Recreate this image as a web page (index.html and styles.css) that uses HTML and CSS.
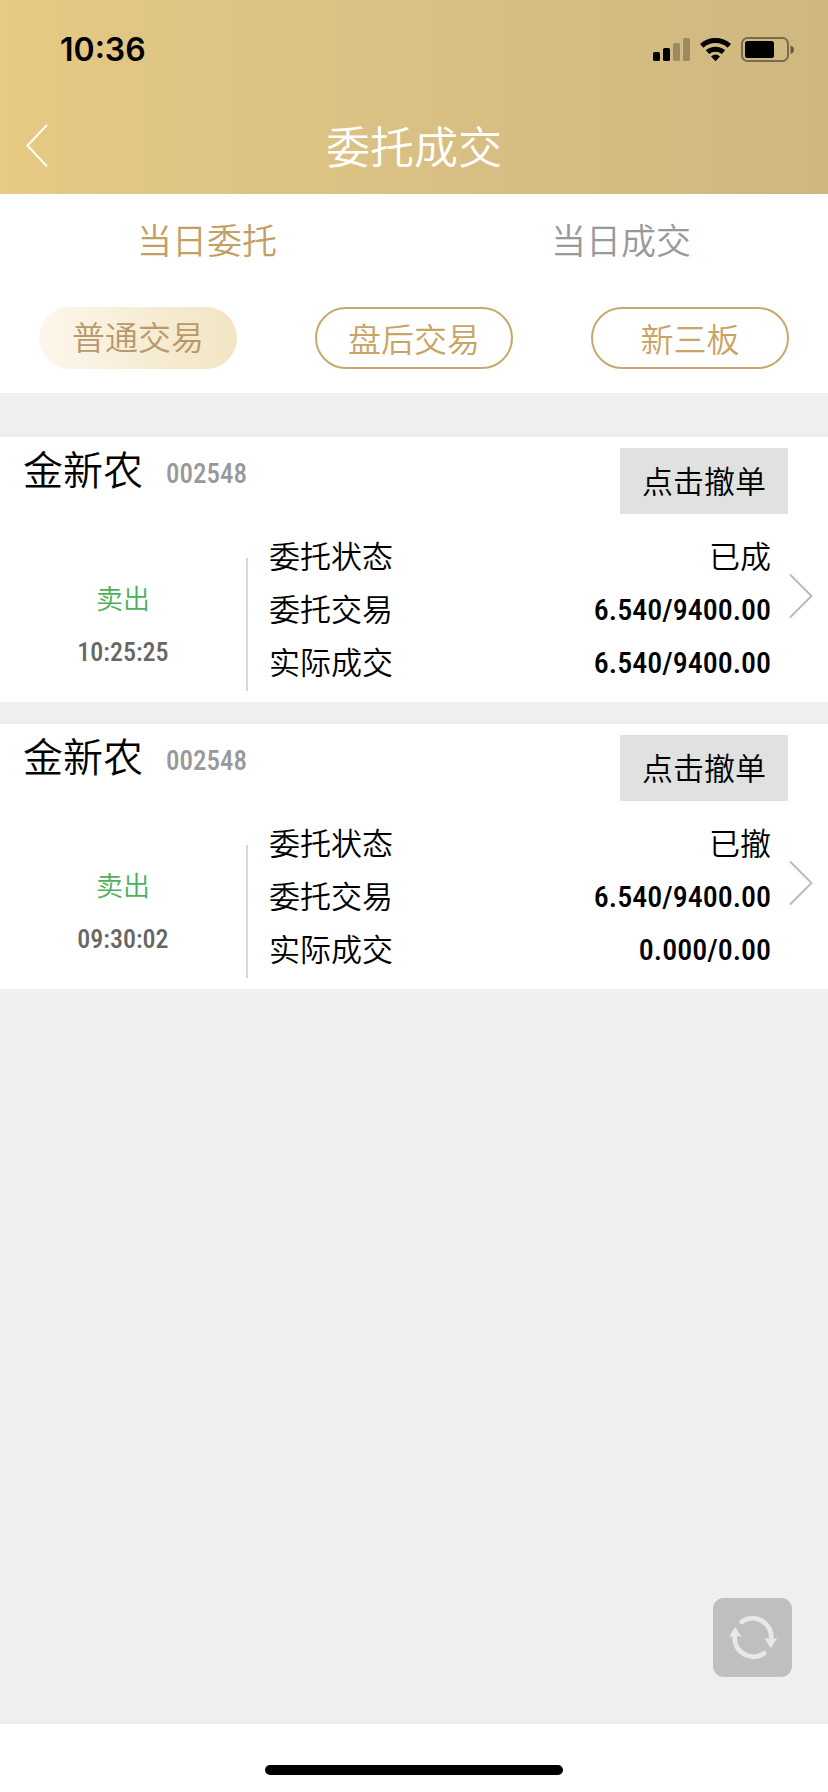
FILE: index.html
```html
<!DOCTYPE html>
<html lang="zh-CN">
<head>
<meta charset="utf-8">
<meta name="viewport" content="width=device-width, initial-scale=1">
<title>委托成交</title>
<link rel="stylesheet" href="styles.css">
</head>
<body>
<div class="app">
  <header class="header">
    <div class="status">
      <span class="status-time">10:36</span>
      <svg class="status-icons" viewBox="0 0 141 26" aria-hidden="true">
        <rect x="0" y="15" width="7" height="9" rx="1.5"/>
        <rect x="10" y="11" width="7" height="13" rx="1.5"/>
        <g opacity=".25"><rect x="20" y="6" width="7" height="18" rx="1.5"/><rect x="30" y="1" width="7" height="23" rx="1.5"/></g>
        <g fill="none" stroke="#000" stroke-width="5">
          <path d="M48.7 8.8A20.6 20.6 0 0 1 76.3 8.8"/>
          <path d="M54.5 15.2A12 12 0 0 1 70.5 15.2"/>
        </g>
        <path d="M62.5 24.2L58 19.6Q62.5 15.4 67 19.6Z"/>
        <rect x="89" y="1" width="46" height="23" rx="5.5" fill="none" stroke="#000" stroke-opacity=".42" stroke-width="2"/>
        <rect x="92" y="4" width="29" height="17" rx="2.500"/>
        <path d="M137.500 8.500Q141 9.500 141 12.700T137.500 17Z" opacity=".5"/>
      </svg>
    </div>
    <div class="titlebar">
      <button class="back" type="button" aria-label="返回">
        <svg viewBox="0 0 22 44" aria-hidden="true"><path d="M21 1L1.500 21.500L21 42.500"/></svg>
      </button>
      <h1 class="title">委托成交</h1>
    </div>
  </header>

  <nav class="filters">
    <div class="tabs">
      <button class="tab tab-active" type="button">当日委托</button>
      <button class="tab" type="button">当日成交</button>
    </div>
    <div class="pills">
      <button class="pill pill-active" type="button">普通交易</button>
      <button class="pill" type="button">盘后交易</button>
      <button class="pill" type="button">新三板</button>
    </div>
  </nav>

  <main class="orders">
    <article class="card">
      <div class="card-head">
        <h2 class="stock">金新农</h2>
        <span class="code">002548</span>
        <button class="cancel" type="button">点击撤单</button>
      </div>
      <div class="card-body">
        <div class="side">
          <span class="sell">卖出</span>
          <time class="time">10:25:25</time>
        </div>
        <dl class="details">
          <div class="row"><dt>委托状态</dt><dd>已成</dd></div>
          <div class="row"><dt>委托交易</dt><dd class="num">6.540/9400.00</dd></div>
          <div class="row"><dt>实际成交</dt><dd class="num">6.540/9400.00</dd></div>
        </dl>
        <button class="more" type="button" aria-label="查看详情">
          <svg viewBox="0 0 24 46" aria-hidden="true"><path d="M1 1.500L22.500 23L1 44.500"/></svg>
        </button>
      </div>
    </article>

    <article class="card">
      <div class="card-head">
        <h2 class="stock">金新农</h2>
        <span class="code">002548</span>
        <button class="cancel" type="button">点击撤单</button>
      </div>
      <div class="card-body">
        <div class="side">
          <span class="sell">卖出</span>
          <time class="time">09:30:02</time>
        </div>
        <dl class="details">
          <div class="row"><dt>委托状态</dt><dd>已撤</dd></div>
          <div class="row"><dt>委托交易</dt><dd class="num">6.540/9400.00</dd></div>
          <div class="row"><dt>实际成交</dt><dd class="num">0.000/0.00</dd></div>
        </dl>
        <button class="more" type="button" aria-label="查看详情">
          <svg viewBox="0 0 24 46" aria-hidden="true"><path d="M1 1.500L22.500 23L1 44.500"/></svg>
        </button>
      </div>
    </article>
  </main>

  <footer class="footer"><div class="home-bar"></div></footer>

  <button class="refresh" type="button" aria-label="刷新">
    <svg viewBox="0 0 80 80" aria-hidden="true">
      <path class="arc" d="M29.200 24A19 19 0 0 1 59 41"/>
      <path class="tip" d="M52 40.500Q58.500 42.500 65 40.500L58.500 51Z"/>
      <path class="arc" d="M51.800 56A19 19 0 0 1 22 39"/>
      <path class="tip" d="M29 39.500Q22.500 37.500 16 39.500L22.500 29Z"/>
    </svg>
  </button>
</div>
</body>
</html>
```
FILE: styles.css
```css
* {
  box-sizing: border-box;
}

body {
  margin: 0;
  background: #fff;
  color: #000;
  font-family: "Noto Sans CJK SC", sans-serif;
  font-weight: 350;
}

button {
  margin: 0;
  padding: 0;
  border: 0;
  background: none;
  color: inherit;
  font: inherit;
  cursor: pointer;
}

svg {
  display: block;
}

.app {
  display: flex;
  flex-direction: column;
  min-height: 100vh;
}

.header {
  background: linear-gradient(90deg, #e8cb82 0%, #e3c883 8%, #dfc583 25%, #dac083 48%, #d4bc82 70%, #cfb781 100%);
}

.status {
  display: flex;
  align-items: center;
  justify-content: space-between;
  height: 100px;
  padding: 0 34px 0 60px;
}

.status-time {
  font: 600 32px/40px Inter, sans-serif;
}

.status-icons {
  width: 141px;
  height: 26px;
}

.titlebar {
  display: grid;
  grid-template-columns: 48px 1fr 48px;
  align-items: center;
  height: 94px;
  padding-bottom: 2px;
}

.back {
  padding-left: 26px;
}

.back svg {
  width: 22px;
  height: 44px;
  fill: none;
  stroke: #fff;
  stroke-width: 2;
}

.title {
  margin: 0;
  padding-bottom: 2px;
  color: #fff;
  font-size: 44px;
  font-weight: 350;
  line-height: 64px;
  text-align: center;
}

.filters {
  padding-bottom: 24px;
}

.tabs {
  display: grid;
  grid-template-columns: 1fr 1fr;
}

.tab {
  height: 92px;
  padding-bottom: 4px;
  color: #999;
  font-size: 35px;
}

.tab-active {
  color: #c49f62;
}

.pills {
  display: grid;
  grid-template-columns: repeat(3, 1fr);
  justify-items: center;
  padding-top: 21px;
}

.pill {
  width: 72%;
  height: 62px;
  border: 2px solid #c8a96c;
  border-radius: 31px;
  color: #c8a465;
  font-size: 33px;
  line-height: 56px;
}

.pill-active {
  padding-bottom: 4px;
  border: 0;
  background: linear-gradient(90deg, #fdf6ec, #f1e5c2);
  color: #b9986a;
}

.orders {
  display: flex;
  flex: 1;
  flex-direction: column;
  gap: 22px;
  padding: 44px 0 80px;
  background: #efefef;
}

.card {
  padding: 11px 0;
  background: #fff;
}

.card-head {
  display: flex;
  align-items: flex-start;
  padding: 0 40px 0 23px;
}

.stock {
  margin: 0;
  font-size: 40px;
  font-weight: 350;
  line-height: 40px;
}

.code,
.time,
.num {
  font-family: "Roboto Condensed", Roboto, sans-serif;
  font-weight: 500;
}

.code {
  margin-left: 23px;
  color: #999;
  font-size: 27px;
  line-height: 52px;
}

.cancel {
  height: 66px;
  margin-left: auto;
  padding: 0 22px 4px;
  background: #e1e1e1;
  font-size: 31px;
}

.card-body {
  display: flex;
  align-items: flex-start;
  margin-top: 14px;
  padding-right: 15px;
}

.side {
  display: flex;
  flex: 0 0 248px;
  flex-direction: column;
  align-items: center;
  margin-top: 30px;
  padding: 13px 0 12px;
  border-right: 2px solid #d8d8d8;
  line-height: 54px;
}

.sell {
  color: #4cb15c;
  font-size: 27px;
}

.time {
  color: #666;
  font-size: 26px;
}

.details {
  flex: 1;
  margin: 0 18px 0 21px;
}

.row {
  display: flex;
  justify-content: space-between;
  height: 53px;
  font-size: 31px;
  line-height: 53px;
}

.row dd {
  margin: 0;
}

.row .num {
  font-size: 30px;
  line-height: 57px;
}

.more {
  margin-top: 45px;
}

.more svg {
  width: 24px;
  height: 46px;
  fill: none;
  stroke: #bbb;
  stroke-width: 2;
}

.footer {
  display: flex;
  justify-content: center;
  height: 68px;
  padding-top: 41px;
}

.home-bar {
  width: 36%;
  height: 10px;
  border-radius: 5px;
  background: #000;
}

.refresh {
  position: fixed;
  right: 36px;
  bottom: 115px;
  width: 79px;
  height: 79px;
  border-radius: 11px;
  background: #bfbfbf;
}

.refresh .arc {
  fill: none;
  stroke: #e8e8e8;
  stroke-width: 5;
  stroke-linecap: round;
}

.refresh .tip {
  fill: #e8e8e8;
}
```
